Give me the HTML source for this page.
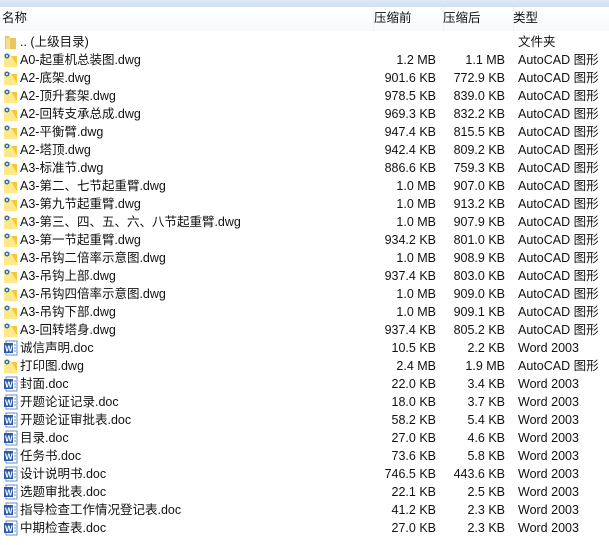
<!DOCTYPE html><html><head><meta charset="utf-8"><style>
body{margin:0;width:609px;height:545px;background:#fff;font-family:"Liberation Sans","Noto Sans CJK SC",sans-serif;font-size:12.5px;color:#111;position:relative;overflow:hidden}
.top{position:absolute;left:0;top:0;width:609px;height:7px;background:linear-gradient(#dde9f6,#cfe0f2)}
.hdr{position:absolute;top:7px;left:0;width:609px;height:24px;background:linear-gradient(#fff,#f7f9fc)}
.sep{position:absolute;top:7px;width:1px;height:24px;background:#eef1f5}
.r{position:absolute;left:0;width:609px;height:18px;line-height:18px;white-space:nowrap}
.n{position:absolute;left:20px}
.a{position:absolute;right:173px}
.b{position:absolute;right:104px}
.t{position:absolute;left:518px}
.ic{position:absolute;left:3px;top:1px;width:15px;height:16px}
</style></head><body>
<div class="top"></div><div class="hdr"></div>
<div class="sep" style="left:373px"></div><div class="sep" style="left:443px"></div><div class="sep" style="left:513px"></div>
<div class="r" style="top:9px"><span style="position:absolute;left:2px">名称</span><span style="position:absolute;left:374px">压缩前</span><span style="position:absolute;left:443px">压缩后</span><span style="position:absolute;left:513px">类型</span></div>
<div id="rows"></div>
<script>
var F='<svg class="ic" viewBox="0 0 15 16"><path d="M2 2h4l1 2h6v11H2z" fill="#e8c65a"/><rect x="3" y="4" width="4" height="11" fill="#f6e08e"/></svg>';
var D='<svg class="ic" viewBox="0 0 15 16"><path d="M1 4h13v11H1z" fill="#f3c93a"/><path d="M1 2h6l8 13H1z" fill="#fde98a"/><circle cx="4" cy="4" r="2.5" fill="#2f6fb5"/><circle cx="4" cy="4" r="1" fill="#fff"/></svg>';
var W='<svg class="ic" viewBox="0 0 15 16"><rect x="3" y="1" width="11" height="14" fill="#fff" stroke="#6b8fc0"/><rect x="1" y="3" width="9" height="10" fill="#2c5aa8"/><text x="2" y="11.5" font-size="8" fill="#fff" font-family="Liberation Sans" font-weight="bold">W</text><path d="M11 5h2M11 8h2M11 11h2" stroke="#6b8fc0"/></svg>';
var rows=[
["A0-起重机总装图.dwg","1.2 MB","1.1 MB"],["A2-底架.dwg","901.6 KB","772.9 KB"],["A2-顶升套架.dwg","978.5 KB","839.0 KB"],["A2-回转支承总成.dwg","969.3 KB","832.2 KB"],["A2-平衡臂.dwg","947.4 KB","815.5 KB"],["A2-塔顶.dwg","942.4 KB","809.2 KB"],["A3-标准节.dwg","886.6 KB","759.3 KB"],["A3-第二、七节起重臂.dwg","1.0 MB","907.0 KB"],["A3-第九节起重臂.dwg","1.0 MB","913.2 KB"],["A3-第三、四、五、六、八节起重臂.dwg","1.0 MB","907.9 KB"],["A3-第一节起重臂.dwg","934.2 KB","801.0 KB"],["A3-吊钩二倍率示意图.dwg","1.0 MB","908.9 KB"],["A3-吊钩上部.dwg","937.4 KB","803.0 KB"],["A3-吊钩四倍率示意图.dwg","1.0 MB","909.0 KB"],["A3-吊钩下部.dwg","1.0 MB","909.1 KB"],["A3-回转塔身.dwg","937.4 KB","805.2 KB"],
["诚信声明.doc","10.5 KB","2.2 KB"],["打印图.dwg","2.4 MB","1.9 MB"],["封面.doc","22.0 KB","3.4 KB"],["开题论证记录.doc","18.0 KB","3.7 KB"],["开题论证审批表.doc","58.2 KB","5.4 KB"],["目录.doc","27.0 KB","4.6 KB"],["任务书.doc","73.6 KB","5.8 KB"],["设计说明书.doc","746.5 KB","443.6 KB"],["选题审批表.doc","22.1 KB","2.5 KB"],["指导检查工作情况登记表.doc","41.2 KB","2.3 KB"],["中期检查表.doc","27.0 KB","2.3 KB"]];
var h='<div class="r" style="top:33px">'+F+'<span class="n">.. (上级目录)</span><span class="t">文件夹</span></div>';
rows.forEach(function(r,i){var dwg=/dwg$/.test(r[0]);h+='<div class="r" style="top:'+(51+18*i)+'px">'+(dwg?D:W)+'<span class="n">'+r[0]+'</span><span class="a">'+r[1]+'</span><span class="b">'+r[2]+'</span><span class="t">'+(dwg?'AutoCAD 图形':'Word 2003')+'</span></div>';});
document.getElementById('rows').innerHTML=h;
</script>
</body></html>
